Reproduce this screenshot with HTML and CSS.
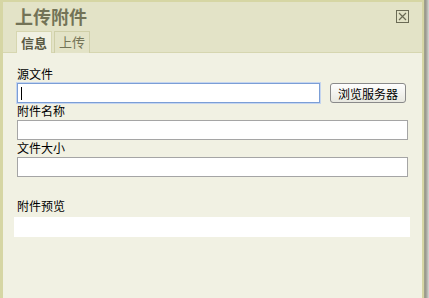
FILE: index.html
```html
<!DOCTYPE html>
<html lang="zh-CN">
<head>
    <meta charset="UTF-8">
    <title>上传附件</title>
    <link rel="stylesheet" href="styles.css">
</head>
<body>
    <div class="dialog">
        <!-- Titelbereich mit Reitern -->
        <div class="header">
            <div class="title-row">
                <span class="title">上传附件</span>
                <span class="close">
                    <svg width="13" height="13" viewBox="0 0 13 13">
                        <rect x="0.5" y="0.5" width="12" height="12" fill="none" stroke="#6b6b55"/>
                        <path d="M3 3 L10 10 M10 3 L3 10" stroke="#6b6b55" stroke-width="1.2"/>
                    </svg>
                </span>
            </div>
            <div class="tabs">
                <span class="tab active">信息</span>
                <span class="tab">上传</span>
            </div>
        </div>
        <!-- Formular -->
        <div class="content">
            <div class="field">
                <label>源文件</label>
                <div class="row">
                    <div class="input focus"><span class="caret"></span></div>
                    <button class="browse">浏览服务器</button>
                </div>
            </div>
            <div class="field">
                <label>附件名称</label>
                <div class="input"></div>
            </div>
            <div class="field">
                <label>文件大小</label>
                <div class="input"></div>
            </div>
            <div class="preview">
                <label>附件预览</label>
                <div class="preview-box"></div>
            </div>
        </div>
    </div>
    <div class="shadow"></div>
</body>
</html>
```

FILE: styles.css
```css
body {
    margin: 0;
    width: 429px;
    height: 298px;
    display: flex;
    font-family: "Noto Sans CJK SC", "Liberation Sans", sans-serif;
    font-size: 12px;
    background-color: #f1f1e3;
    overflow: hidden;
}

.dialog {
    width: 419px;
    height: 296px;
    border-top: 2px solid #d6d6a4;
    border-left: 3px solid #d6d6a4;
    border-right: 2px solid #d6d6a4;
    display: flex;
    flex-direction: column;
    background-color: #f1f1e3;
}

.shadow {
    width: 5px;
    height: 298px;
    background: linear-gradient(to right, #a3a38a, #9a9a90, #b8b8b0, #d8d8d8);
}

.header {
    background-color: #e3e3c7;
    border-bottom: 1px solid #d6d6b0;
    height: 50px;
    display: flex;
    flex-direction: column;
    justify-content: space-between;
}

.title-row {
    display: flex;
    justify-content: space-between;
    align-items: flex-start;
    padding: 2px 13px 0 12px;
}

.title {
    font-size: 18px;
    font-weight: bold;
    color: #737357;
    line-height: 24px;
}

.close {
    margin-top: 6px;
    display: flex;
}

.tabs {
    display: flex;
    gap: 2px;
    padding-left: 13px;
    margin-bottom: -1px;
}

.tab {
    font-size: 13px;
    line-height: 19px;
    padding: 0 4px;
    color: #737357;
    background-color: #e3e3c7;
    border: 1px solid #cfcfa8;
    border-bottom: none;
}

.tab.active {
    font-weight: bold;
    color: #5a5a44;
    background-color: #f1f1e3;
    border-color: #d6d6b0;
    padding: 0 4px;
    line-height: 21px;
}

.content {
    padding: 13px 14px 0 11px;
    display: flex;
    flex-direction: column;
}

.field {
    display: flex;
    flex-direction: column;
    margin-left: 3px;
}

.field label {
    line-height: 16px;
    margin-bottom: 1px;
}

.row {
    display: flex;
    align-items: center;
    gap: 10px;
}

.input {
    height: 18px;
    background-color: #fff;
    border: 1px solid #a5a5a5;
    box-sizing: content-box;
}

.row .input {
    width: 301px;
    display: flex;
    align-items: center;
}

.input.focus {
    border-color: #7b9ed6;
    box-shadow: 0 0 0 1px #c5d5ef;
}

.caret {
    width: 1px;
    height: 13px;
    margin-left: 3px;
    background-color: #000;
}

.browse {
    font-family: inherit;
    font-size: 12px;
    height: 20px;
    padding: 0 7px;
    border: 1px solid #8a8a8a;
    border-radius: 3px;
    background: linear-gradient(#fefefe, #e8e8e0);
    color: #000;
}

.preview {
    margin-top: 21px;
    display: flex;
    flex-direction: column;
}

.preview label {
    margin-left: 3px;
    line-height: 16px;
    margin-bottom: 3px;
}

.preview-box {
    height: 20px;
    width: 396px;
    background-color: #fff;
}
```
